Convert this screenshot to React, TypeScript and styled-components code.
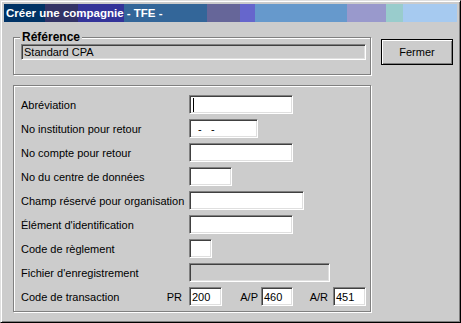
import React from 'react';
import styled, { createGlobalStyle } from 'styled-components';

type FieldRow = {
  label: string;
  width: number;
  value?: string;
  caret?: boolean;
  disabled?: boolean;
};

const ROWS: FieldRow[] = [
  { label: 'Abréviation', width: 104, caret: true },
  { label: 'No institution pour retour', width: 69, value: '  -   -' },
  { label: 'No compte pour retour', width: 104 },
  { label: 'No du centre de données', width: 43 },
  { label: 'Champ réservé pour organisation', width: 115 },
  { label: "Élément d'identification", width: 104 },
  { label: 'Code de règlement', width: 23 },
  { label: "Fichier d'enregistrement", width: 141, disabled: true },
];

/** Fenêtre "Créer une compagnie" */
export default function App() {
  return (
    <React.Fragment>
      <GlobalStyle />
      <Window>
        <TitleBar>Créer une compagnie - TFE -</TitleBar>
        <Client>
          <Main>
            {/* Référence */}
            <Group $pad="0 4px 14px 7px">
              <Legend>Référence</Legend>
              <Field $h={16} $disabled>
                Standard CPA
              </Field>
            </Group>

            {/* Champs de la compagnie */}
            <Group $pad="9px 4px 5px 7px">
              <Rows>
                {ROWS.map(row => (
                  <Row key={row.label}>
                    <Label>{row.label}</Label>
                    <Field $w={row.width} $disabled={row.disabled}>
                      {row.caret && <Caret />}
                      {row.value}
                    </Field>
                  </Row>
                ))}
                <Row>
                  <Label>
                    Code de transaction
                    <span className="sub">PR</span>
                  </Label>
                  <TxCodes>
                    <Field $w={33}>200</Field>
                    <TxLabel $pad={3}>A/P</TxLabel>
                    <Field $w={32}>460</Field>
                    <TxLabel $pad={5}>A/R</TxLabel>
                    <Field $w={33}>451</Field>
                  </TxCodes>
                </Row>
              </Rows>
            </Group>
          </Main>
          <Button type="button">Fermer</Button>
        </Client>
      </Window>
    </React.Fragment>
  );
}

const GlobalStyle = createGlobalStyle`
  html, body {
    margin: 0;
    padding: 0;
    background: #cccccc;
  }
  body {
    font-family: "Liberation Sans", Arial, sans-serif;
    font-size: 11px;
    color: #000;
  }
`;

const Window = styled.div`
  box-sizing: border-box;
  width: 461px;
  height: 323px;
  display: flex;
  flex-direction: column;
  padding: 3px;
  background: #cccccc;
  border: 1px solid;
  border-color: #dfdfdf #000 #000 #dfdfdf;
  box-shadow: inset 1px 1px 0 #fff, inset -1px -1px 0 #808080;
`;

const TitleBar = styled.div`
  flex: none;
  height: 18px;
  padding-left: 2px;
  color: #fff;
  font-weight: 700;
  font-size: 11.5px;
  line-height: 18px;
  white-space: nowrap;
  background: linear-gradient(
    to right,
    #003366 0 41px,
    #333366 41px 74px,
    #333399 74px 120px,
    #336699 120px 203px,
    #666699 203px 236px,
    #6666cc 236px 251px,
    #6699cc 251px 343px,
    #9999cc 343px 382px,
    #99cccc 382px 399px,
    #a6caf0 399px
  );
`;

const Client = styled.div`
  flex: 1;
  display: flex;
  align-items: flex-start;
  padding: 9px 0 0 9px;
`;

const Main = styled.div`
  width: 358px;
  display: flex;
  flex-direction: column;
  gap: 10px;
`;

// boîte de groupe gravée
const Group = styled.fieldset<{ $pad: string }>`
  box-sizing: border-box;
  margin: 0;
  min-width: 0;
  padding: ${p => p.$pad};
  border: 1px solid #808080;
  box-shadow: inset 1px 1px 0 #fff, 1px 1px 0 #fff;
`;

const Legend = styled.legend`
  margin-left: -1px;
  padding: 0 2px;
  height: 13px;
  line-height: 13px;
  font-weight: 700;
  font-size: 12px;
  background: #cccccc;
`;

const Rows = styled.div`
  display: flex;
  flex-direction: column;
  gap: 5px;
`;

const Row = styled.div`
  display: grid;
  grid-template-columns: 168px auto;
  align-items: center;
  height: 19px;
`;

const Label = styled.div`
  display: flex;
  justify-content: space-between;
  white-space: nowrap;

  .sub {
    margin-right: 7px;
  }
`;

const Field = styled.div<{ $w?: number; $h?: number; $disabled?: boolean }>`
  box-sizing: border-box;
  width: ${p => (p.$w ? `${p.$w}px` : '100%')};
  height: ${p => p.$h ?? 19}px;
  display: flex;
  align-items: center;
  padding-left: 2px;
  white-space: pre;
  background: ${p => (p.$disabled ? '#cccccc' : '#fff')};
  border: 1px solid;
  border-color: #808080 #fff #fff #808080;
  box-shadow: inset 1px 1px 0 #404040, inset -1px -1px 0 #dfdfdf;
`;

const Caret = styled.span`
  width: 1px;
  height: 14px;
  margin-left: 1px;
  background: #000;
`;

const TxCodes = styled.div`
  display: grid;
  grid-template-columns: 33px 39px 32px 40px 33px;
  align-items: center;
`;

const TxLabel = styled.span<{ $pad: number }>`
  text-align: right;
  padding-right: ${p => p.$pad}px;
`;

const Button = styled.button`
  box-sizing: border-box;
  width: 72px;
  height: 26px;
  margin: 8px 0 0 10px;
  padding: 0;
  font-family: inherit;
  font-size: 11px;
  color: #000;
  background: #cccccc;
  border: 1px solid #000;
  box-shadow: inset 1px 1px 0 #fff, inset -1px -1px 0 #808080;
`;
